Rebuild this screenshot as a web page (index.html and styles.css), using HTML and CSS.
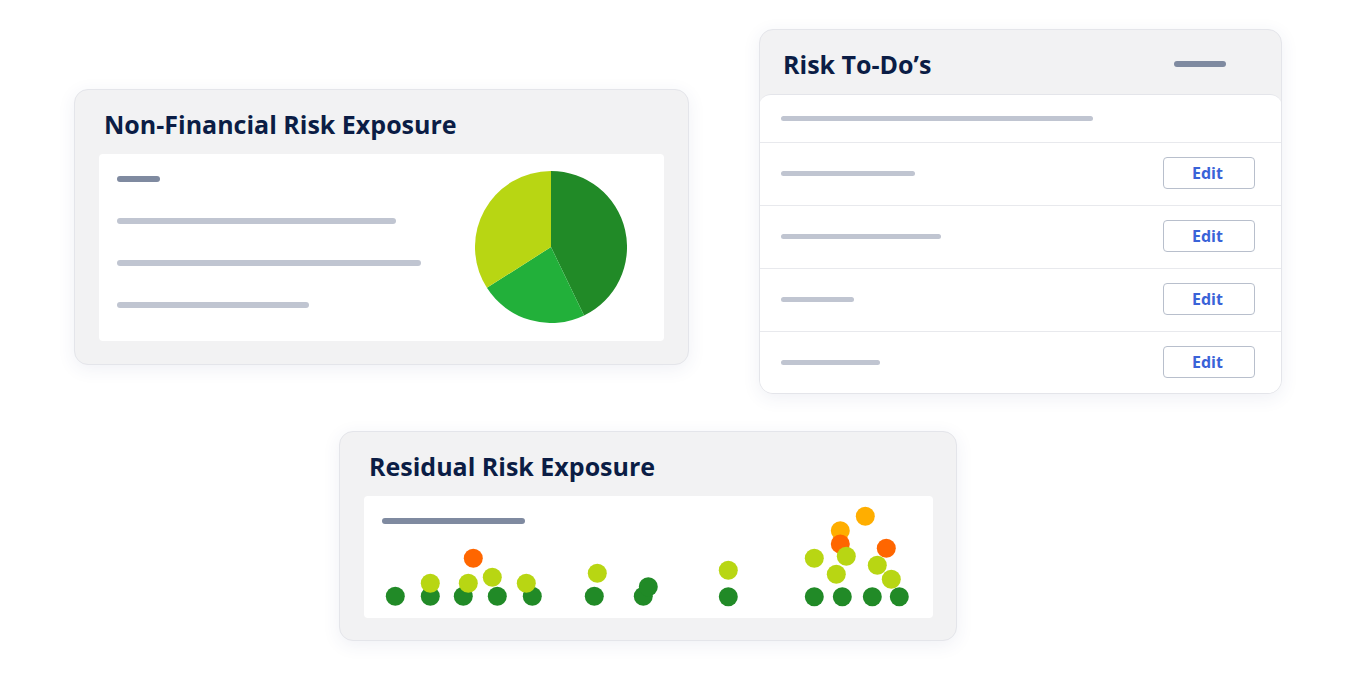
FILE: index.html
```html
<!DOCTYPE html>
<html lang="en">
<head>
<meta charset="utf-8">
<title>Risk Dashboard</title>
<link rel="stylesheet" href="styles.css">
</head>
<body>
<div class="stage">
  <div class="row-top">
    <section class="card card-nfr">
      <header class="card-head"><h2 class="card-title">Non-Financial Risk Exposure</h2></header>
      <div class="panel nfr-panel">
        <div class="nfr-lines">
          <span class="bar bar-dark w43"></span>
          <span class="bar bar-light w279"></span>
          <span class="bar bar-light w304"></span>
          <span class="bar bar-light w192"></span>
        </div>
        <svg class="pie" width="152" height="152" viewBox="0 0 152 152">
          <path d="M76 76 L76 0 A76 76 0 0 1 109.08 144.43 Z" fill="#218a27"/>
          <path d="M76 76 L109.08 144.43 A76 76 0 0 1 11.9 116.83 Z" fill="#22b03a"/>
          <path d="M76 76 L11.9 116.83 A76 76 0 0 1 76 0 Z" fill="#b8d613"/>
        </svg>
      </div>
    </section>

    <section class="card card-todo">
      <header class="card-head todo-head">
        <h2 class="card-title">Risk To-Do’s</h2>
        <span class="bar bar-dark w52"></span>
      </header>
      <div class="todo-body">
        <div class="todo-row first"><span class="bar bar-light w312"></span></div>
        <div class="todo-row"><span class="bar bar-light w134"></span><button class="edit-btn">Edit</button></div>
        <div class="todo-row"><span class="bar bar-light w160"></span><button class="edit-btn">Edit</button></div>
        <div class="todo-row"><span class="bar bar-light w73"></span><button class="edit-btn">Edit</button></div>
        <div class="todo-row"><span class="bar bar-light w99"></span><button class="edit-btn">Edit</button></div>
      </div>
    </section>
  </div>

  <section class="card card-res">
    <header class="card-head"><h2 class="card-title">Residual Risk Exposure</h2></header>
    <div class="panel res-panel">
      <span class="bar bar-dark w143"></span>
      <svg class="dots" width="569" height="122" viewBox="0 0 569 122">
        <g fill="#218a27">
          <circle cx="31.3" cy="100.3" r="9.5"/>
          <circle cx="66.3" cy="100.3" r="9.5"/>
          <circle cx="99.3" cy="100.3" r="9.5"/>
          <circle cx="133.3" cy="100.3" r="9.5"/>
          <circle cx="168.3" cy="100.3" r="9.5"/>
          <circle cx="230.3" cy="100.3" r="9.5"/>
          <circle cx="279.3" cy="100.3" r="9.5"/>
          <circle cx="284.3" cy="90.7" r="9.5"/>
          <circle cx="364.3" cy="100.7" r="9.5"/>
          <circle cx="450.3" cy="100.7" r="9.5"/>
          <circle cx="478.3" cy="100.7" r="9.5"/>
          <circle cx="508.3" cy="100.7" r="9.5"/>
          <circle cx="535.3" cy="100.7" r="9.5"/>
        </g>
        <g fill="#ffae00">
          <circle cx="501.3" cy="20.3" r="9.5"/>
          <circle cx="476.3" cy="34.7" r="9.5"/>
        </g>
        <g fill="#ff6600">
          <circle cx="109.3" cy="62.3" r="9.5"/>
          <circle cx="476.3" cy="48" r="9.5"/>
          <circle cx="522.3" cy="52.3" r="9.5"/>
        </g>
        <g fill="#b8d613">
          <circle cx="66.3" cy="87.3" r="9.5"/>
          <circle cx="104.3" cy="87.3" r="9.5"/>
          <circle cx="128.3" cy="81.3" r="9.5"/>
          <circle cx="162.3" cy="87.3" r="9.5"/>
          <circle cx="233.3" cy="77.3" r="9.5"/>
          <circle cx="364.3" cy="74.3" r="9.5"/>
          <circle cx="450.3" cy="62.3" r="9.5"/>
          <circle cx="482.3" cy="60.3" r="9.5"/>
          <circle cx="472.3" cy="78.3" r="9.5"/>
          <circle cx="513.3" cy="69.3" r="9.5"/>
          <circle cx="527.3" cy="83.3" r="9.5"/>
        </g>
      </svg>
    </div>
  </section>
</div>
</body>
</html>
```

FILE: styles.css
```css
* { box-sizing: border-box; }

html, body {
  margin: 0;
  padding: 0;
  background: #ffffff;
  font-family: "Open Sans", "Noto Sans", "Liberation Sans", sans-serif;
}

.stage {
  width: 1367px;
  height: 679px;
  padding-top: 29px;
  overflow: hidden;
}

.row-top {
  display: flex;
  align-items: flex-start;
}

.card {
  background: #f2f2f3;
  border: 1px solid #e4e5ea;
  border-radius: 14px;
  box-shadow: 0 4px 18px rgba(50, 60, 130, 0.08);
  overflow: hidden;
}

.card-head {
  height: 64px;
  padding: 19px 0 15px 29px;
  display: flex;
  align-items: center;
}

.card-title {
  margin: 0;
  font-size: 25px;
  line-height: 30px;
  font-weight: 700;
  color: #0b1d45;
}

.panel {
  background: #ffffff;
  border-radius: 4px;
}

.bar {
  display: block;
  height: 6px;
  border-radius: 3px;
  flex: none;
}
.bar-dark { background: #7f8aa0; }
.bar-light { background: #c0c5d1; height: 5px; }

.w43 { width: 43px; }
.w52 { width: 52px; }
.w73 { width: 73px; }
.w99 { width: 99px; }
.w134 { width: 134px; }
.w143 { width: 143px; }
.w160 { width: 160px; }
.w192 { width: 192px; }
.w279 { width: 279px; }
.w304 { width: 304px; }
.w312 { width: 312px; }

/* Non-financial card */
.card-nfr {
  width: 615px;
  height: 276px;
  margin-left: 74px;
  margin-top: 60px;
}

.nfr-panel {
  margin: 0 24px 0 24px;
  height: 187px;
  display: flex;
  justify-content: space-between;
  align-items: flex-start;
  padding: 0 37px 0 18px;
}

.nfr-lines {
  padding-top: 22px;
  display: flex;
  flex-direction: column;
  gap: 36px;
}
.nfr-lines .bar-light { height: 6px; }

.pie {
  display: block;
  margin-top: 17px;
}

/* To-do card */
.card-todo {
  width: 523px;
  height: 365px;
  margin-left: 70px;
}

.todo-head {
  justify-content: space-between;
  padding-left: 23px;
  padding-right: 55px;
}

.todo-body {
  background: #ffffff;
  border-top: 1px solid #e4e5ea;
  border-radius: 12px 12px 14px 14px;
  margin: 0 -1px;
}

.todo-row {
  height: 63px;
  display: flex;
  align-items: center;
  justify-content: space-between;
  padding: 0 27px 2px 22px;
  border-top: 1px solid #e8e9ed;
}
.todo-row.first {
  height: 47px;
  border-top: none;
  padding-bottom: 0;
}

.edit-btn {
  width: 92px;
  height: 32px;
  background: #ffffff;
  border: 1px solid #b8bfcc;
  border-radius: 4px;
  font-family: "Open Sans", "Noto Sans", "Liberation Sans", sans-serif;
  font-size: 16px;
  font-weight: 700;
  color: #3a63d8;
  padding: 0 3px 0 0;
  line-height: 30px;
}

/* Residual card */
.card-res {
  width: 618px;
  height: 210px;
  margin-left: 339px;
  margin-top: 37px;
}
.card-res .card-head { padding-left: 29px; }

.res-panel {
  margin: 0 23px 0 24px;
  height: 122px;
  position: relative;
  padding: 22px 0 0 18px;
}

.dots {
  position: absolute;
  left: 0;
  top: 0;
  display: block;
}
```
